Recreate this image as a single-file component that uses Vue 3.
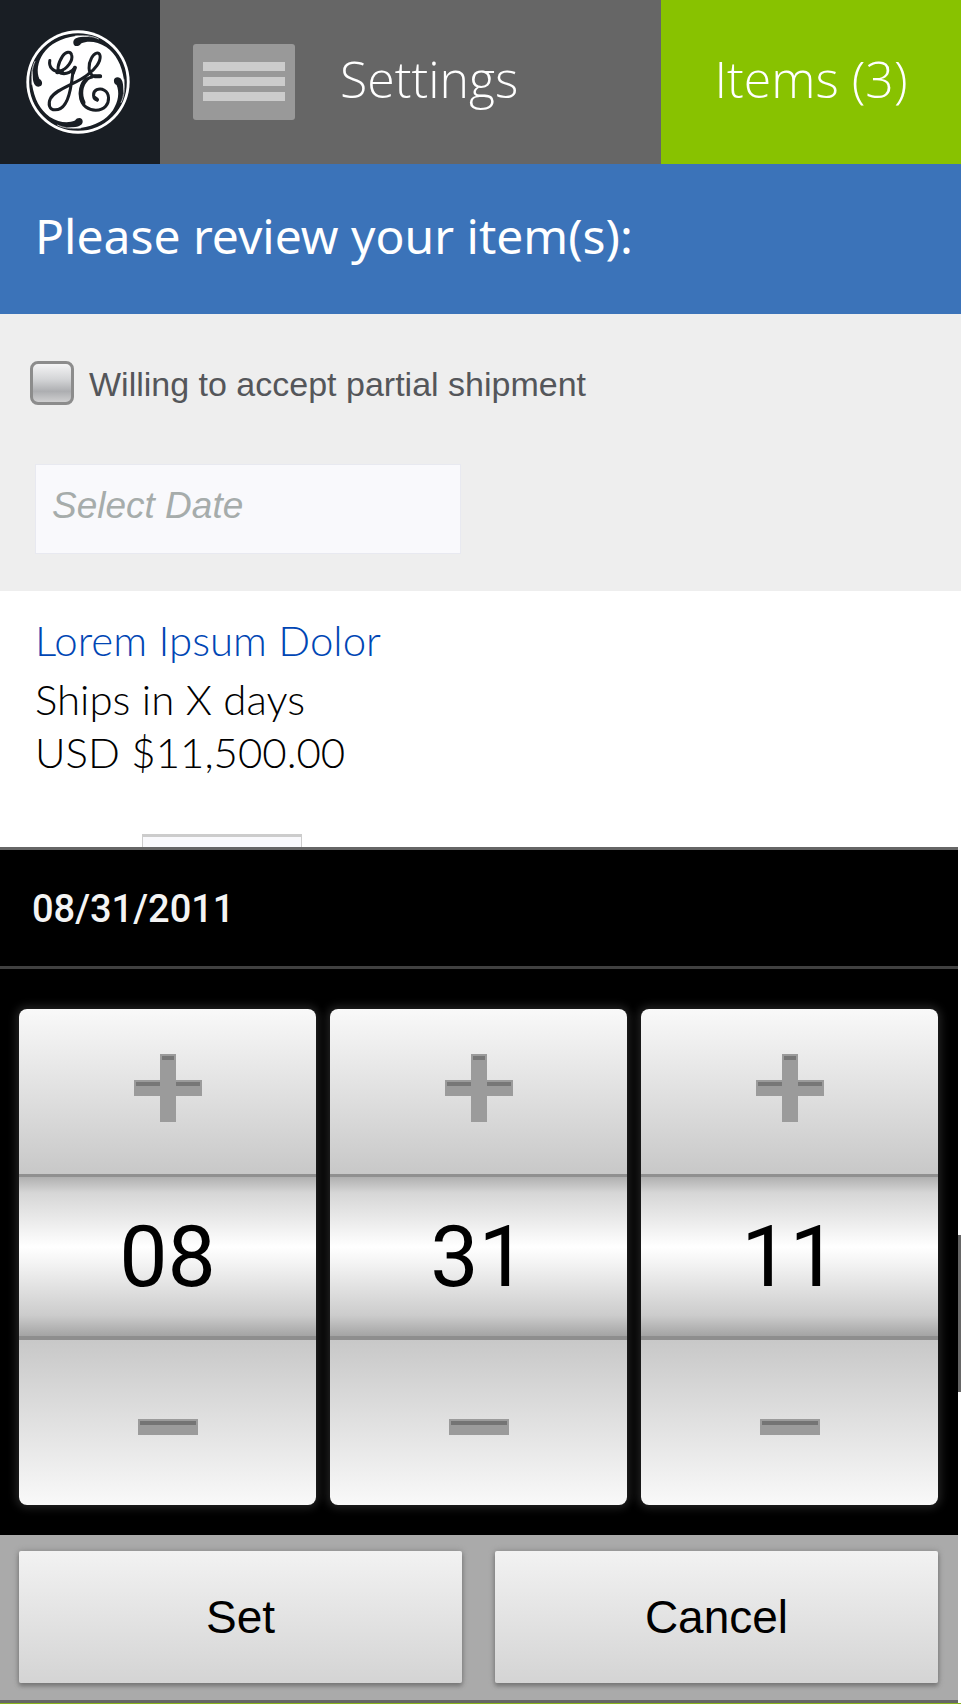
<script setup>
import { ref, computed } from 'vue'

const partial = ref(false)
const date = ref('')
const columns = ref([
  { id: 'month', label: 'month', value: 8, min: 1, max: 12 },
  { id: 'day', label: 'day', value: 31, min: 1, max: 31 },
  { id: 'year', label: 'year', value: 11, min: 0, max: 99 },
])

const pad = (n) => String(n).padStart(2, '0')
const title = computed(() => {
  const [m, d, y] = columns.value.map((c) => pad(c.value))
  return `${m}/${d}/20${y}`
})

function step(col, by) {
  const span = col.max - col.min + 1
  col.value = ((col.value - col.min + by + span) % span) + col.min
}
function apply() {
  date.value = title.value
}
</script>

<template>
  <div class="page">
    <header class="bar">
      <a class="logo" href="#" aria-label="GE home">
        <svg viewBox="77 90 310 310" aria-hidden="true">
          <circle cx="232" cy="245" r="154" fill="#fff" />
          <circle cx="232" cy="245" r="142" fill="none" stroke="#191e24" stroke-width="7" />
          <g fill="#191e24">
            <path
              v-for="turn in [0, 90, 180, 270]"
              :key="turn"
              :transform="`rotate(${turn} 232 245)`"
              d="M218 127C218 116 230 111 246 110C262 109 278 112 292 116C332 132 362 164 374 232L369 238C362 194 346 162 316 141C290 124 262 121 241 130C238 136 233 138 228 138C222 138 218 134 218 127Z"
            />
          </g>
          <g fill="none" stroke="#fff" stroke-width="2">
            <path
              v-for="turn in [0, 90, 180, 270]"
              :key="turn"
              :transform="`rotate(${turn} 232 245)`"
              d="M236 109C256 105 275 108 294 117"
            />
          </g>
          <g fill="none" stroke="#191e24" stroke-width="9" stroke-linecap="round" stroke-linejoin="round">
            <path d="M148 181C144 200 158 215 176 213C200 208 218 180 213 164C210 152 195 154 186 168C172 190 166 214 182 219C198 223 216 214 223 201" />
            <path d="M223 201C214 214 216 232 212 250C206 292 192 328 164 328C146 328 142 310 150 294C166 264 230 250 262 222C282 208 300 185 298 168C296 152 280 158 272 174C262 192 262 218 276 226C284 230 292 228 299 228" />
            <path d="M274 230C250 235 236 262 239 287C242 318 265 329 285 329C312 329 324 310 323 292C322 270 302 262 288 268C274 275 276 296 289 299" />
          </g>
          <g fill="none" stroke="#191e24" stroke-linecap="round">
            <path d="M256 238C240 254 236 284 248 306" stroke-width="13" />
            <path d="M282 228L298 228M170 216L184 214" stroke-width="12" />
            <path d="M282 292L289 297M223 203L217 218" stroke-width="11" />
          </g>
        </svg>
      </a>
      <nav class="menu">
        <button class="burger" type="button" aria-label="Menu">
          <span></span><span></span><span></span>
        </button>
        <a class="settings" href="#">Settings</a>
      </nav>
      <a class="items" href="#">Items (3)</a>
    </header>

    <h1 class="heading">Please review your item(s):</h1>

    <section class="options">
      <label class="partial">
        <input v-model="partial" type="checkbox" />
        <span>Willing to accept partial shipment</span>
      </label>
      <input v-model="date" class="date" type="text" placeholder="Select Date" aria-label="Select Date" />
    </section>

    <section class="item">
      <a class="name" href="#">Lorem Ipsum Dolor</a>
      <p>Ships in X days</p>
      <p>USD $11,500.00</p>
      <input class="qty" type="text" aria-label="Quantity" />
    </section>

    <div class="overlay">
      <div class="dialog" role="dialog" aria-labelledby="picker-title">
        <h2 id="picker-title">{{ title }}</h2>
        <div class="wheels">
          <div v-for="col in columns" :key="col.id" class="wheel">
            <button class="up" type="button" :aria-label="`Increase ${col.label}`" @click="step(col, 1)">
              <svg viewBox="0 0 68 68" aria-hidden="true">
                <path d="M26 0H42V26H68V42H42V68H26V42H0V26H26Z" fill="#9b9b9b" />
                <path d="M28 2H40V6H28ZM2 28H26V32H2ZM42 28H66V32H42Z" fill="#777" />
              </svg>
            </button>
            <output>{{ pad(col.value) }}</output>
            <button class="down" type="button" :aria-label="`Decrease ${col.label}`" @click="step(col, -1)">
              <svg viewBox="0 0 68 68" aria-hidden="true">
                <path d="M4 26H64V42H4Z" fill="#9b9b9b" />
                <path d="M6 28H62V32H6Z" fill="#747474" />
              </svg>
            </button>
          </div>
        </div>
        <div class="actions">
          <button type="button" @click="apply">Set</button>
          <button type="button">Cancel</button>
        </div>
      </div>
      <div class="scroll-thumb"></div>
    </div>
  </div>
</template>

<style>
body {
  margin: 0;
  background: #fff;
}
</style>

<style scoped>
.page {
  font-family: "Liberation Sans", Arial, sans-serif;
  color: #000;
  border-bottom: 1px solid #8ab31d;
}
.page * {
  box-sizing: border-box;
}
a {
  text-decoration: none;
}
button {
  padding: 0;
  border: 0;
  font-family: inherit;
  cursor: pointer;
}

.bar {
  display: flex;
  height: 164px;
  background: #666;
  font-family: "Open Sans", "Noto Sans", sans-serif;
  font-size: 50px;
  font-weight: 350;
  line-height: 60px;
}
.bar a {
  color: #fff;
}
.logo {
  display: flex;
  align-items: center;
  justify-content: center;
  width: 160px;
  padding-right: 5px;
  background: #191e24;
}
.logo svg {
  width: 104px;
  height: 104px;
}
.menu {
  flex: 1;
  display: flex;
  align-items: center;
  gap: 45px;
  padding-left: 33px;
}
.settings,
.items {
  padding-bottom: 6px;
}
.burger {
  display: flex;
  flex-direction: column;
  align-items: center;
  justify-content: center;
  gap: 6px;
  width: 102px;
  height: 76px;
  padding-bottom: 2px;
  border-radius: 3px;
  background: #999;
}
.burger span {
  width: 82px;
  height: 9px;
  background: #ccc;
}
.items {
  display: flex;
  align-items: center;
  justify-content: center;
  width: 300px;
  background: #88c200;
}

.heading {
  margin: 0;
  padding: 42px 35px 48px;
  background: #3b73b9;
  color: #fff;
  font-family: "Noto Sans", "Open Sans", sans-serif;
  font-size: 48px;
  font-weight: 400;
  line-height: 60px;
}

.options {
  display: flex;
  flex-direction: column;
  align-items: flex-start;
  gap: 59px;
  padding: 46px 30px 38px;
  background: #eee;
}
.partial {
  display: flex;
  align-items: center;
  gap: 15px;
  color: #54565a;
  font-size: 34px;
  line-height: 44px;
}
.partial span {
  padding-top: 2px;
}
.partial input {
  appearance: none;
  width: 44px;
  height: 44px;
  margin: 0;
  border: 3px solid #8c8c8c;
  border-radius: 8px;
  background: linear-gradient(#f4f4f5, #d4d5d7 40%, #adaeb1 72%, #cfcfd0);
}
.date {
  width: 426px;
  height: 90px;
  margin-left: 5px;
  padding: 0 16px 6px;
  border: 1px solid #e8e9f0;
  background: #f9f9fc;
  font: italic 37px "Liberation Sans", Arial, sans-serif;
}
.options {
  padding-bottom: 37px;
  gap: 58px;
}
.date::placeholder {
  color: #a6acab;
  opacity: 1;
}

.item {
  display: flex;
  flex-direction: column;
  align-items: flex-start;
  height: 256px;
  padding: 23px 35px 0;
  overflow: hidden;
  font-family: Lato, "Open Sans", sans-serif;
  font-size: 42px;
  font-weight: 300;
  line-height: 53px;
}
.item p {
  margin: 0;
}
.name {
  margin-bottom: 6px;
  color: #0046b4;
}
.qty {
  flex: none;
  width: 160px;
  height: 60px;
  margin: 55px 0 0 107px;
  border: 1px solid #ccc;
  border-top-width: 3px;
  background: #f9f9fc;
}

.overlay {
  position: relative;
  padding-right: 3px;
}
.scroll-thumb {
  position: absolute;
  top: 388px;
  right: 0;
  width: 3px;
  height: 157px;
  background: #666;
}
.dialog {
  border-top: 3px solid #666;
  border-bottom: 3px solid #666;
  background: #000;
}
.dialog h2 {
  margin: 0;
  padding: 36px 32px 33px;
  border-bottom: 3px solid #404040;
  color: #f4f4f4;
  font-family: Roboto, sans-serif;
  font-size: 38px;
  font-weight: 500;
  line-height: 47px;
}
.wheels {
  display: grid;
  grid-template-columns: repeat(3, 1fr);
  gap: 14px;
  padding: 40px 20px 30px 19px;
}
.wheel {
  display: flex;
  flex-direction: column;
  overflow: hidden;
  border-radius: 8px;
  box-shadow: 0 0 8px 3px #222;
}
.wheel button {
  display: flex;
  align-items: center;
  justify-content: center;
  height: 165px;
}
.wheel svg {
  width: 68px;
  height: 68px;
}
.wheel .up {
  padding-bottom: 8px;
  background: linear-gradient(#f9f9f9, #c8c8c8);
}
.wheel .down {
  padding-top: 8px;
  background: linear-gradient(#c8c8c8, #f9f9f9);
}
.wheel output {
  display: block;
  height: 166px;
  border-top: 3px solid #909090;
  border-bottom: 4px solid #8e8e8e;
  background: linear-gradient(#b0b0b0, #d6d6d6 10%, #fff 44%, #f4f4f4 54%, #ccc 87%, #a4a4a4);
  font-family: Roboto, sans-serif;
  font-size: 86px;
  line-height: 160px;
  text-align: center;
}
.actions {
  display: grid;
  grid-template-columns: 1fr 1fr;
  gap: 33px;
  padding: 16px 20px 17px 19px;
  background: #aaa;
}
.actions button {
  height: 132px;
  border-radius: 2px;
  background: linear-gradient(#f2f2f2, #d4d4d4);
  box-shadow: 0 3px 4px #777, 0 0 6px #888;
  color: #000;
  font-size: 46px;
}
</style>
